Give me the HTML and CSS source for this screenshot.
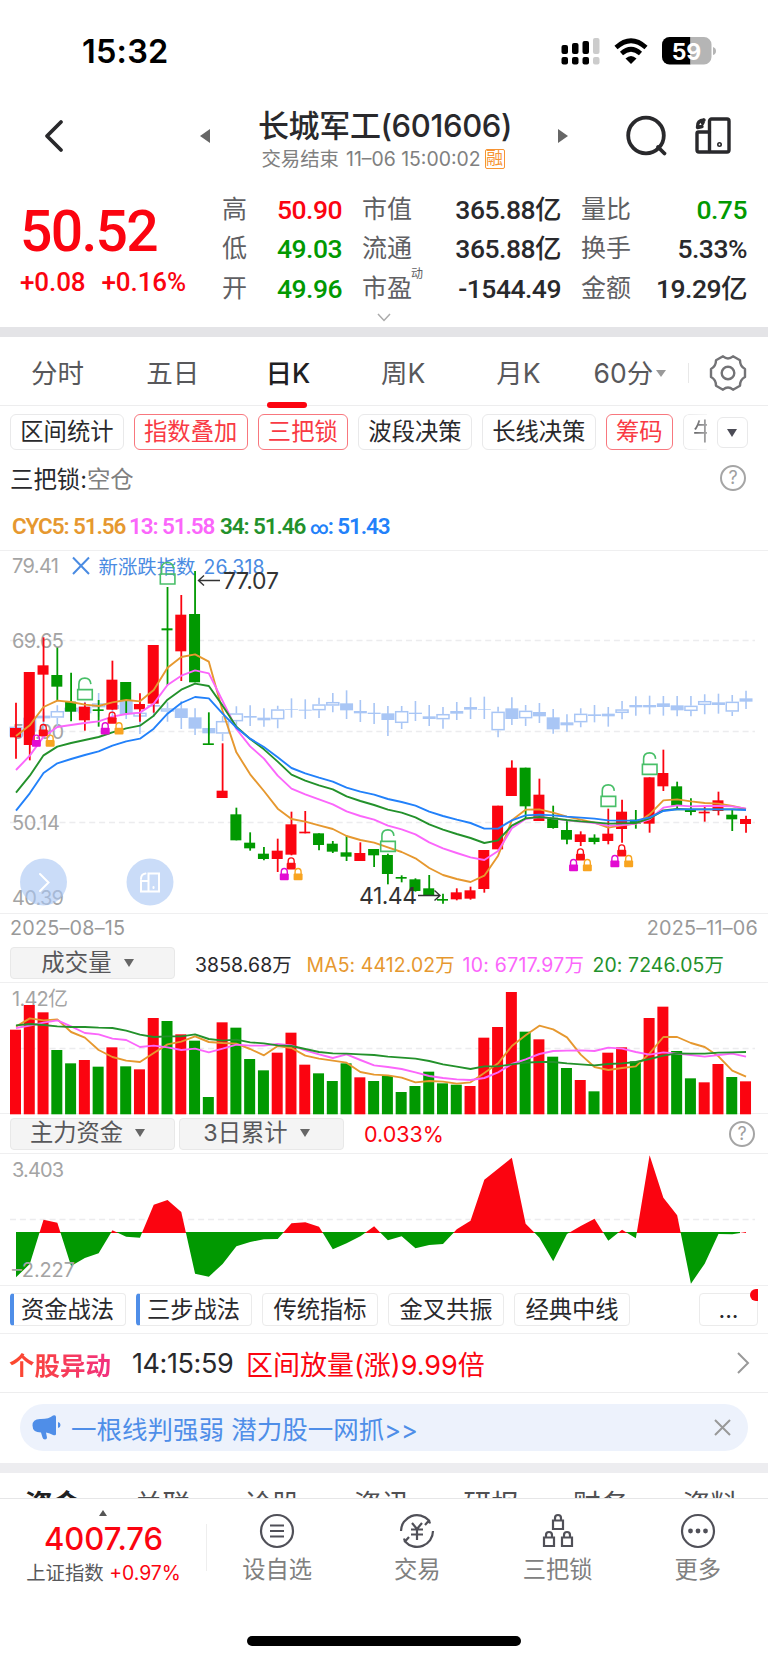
FILE: index.html
```html
<!DOCTYPE html>
<html lang="zh-CN">
<head>
    <meta charset="UTF-8">
    <meta name="viewport" content="width=device-width, initial-scale=1.0">
    <title>长城军工(601606)</title>
    <link rel="stylesheet" href="styles.css">
</head>
<body>
    <div class="status-bar">
        <span class="clock">15:32</span>
        <svg class="status-icons" width="156" height="30" viewBox="562.5 36 156 30">
            <g fill="#000">
                <rect x="562" y="45" width="6.5" height="9" rx="2"/>
                <rect x="572.5" y="43" width="6.5" height="11" rx="2"/>
                <rect x="583" y="41" width="6.5" height="13" rx="2"/>
                <rect x="562" y="57" width="6.5" height="7.5" rx="2"/>
                <rect x="572.5" y="57" width="6.5" height="7.5" rx="2"/>
                <rect x="583" y="57" width="6.5" height="7.5" rx="2"/>
            </g>
            <g fill="#ccc">
                <rect x="593.5" y="38" width="6.5" height="16" rx="2"/>
                <rect x="593.5" y="57" width="6.5" height="7.5" rx="2"/>
            </g>
            <g fill="none" stroke="#000" stroke-width="4.6">
                <path d="M616.5 47.5Q631.5 34 646.5 47.5"/>
                <path d="M622 53.5Q631.5 45 641 53.5"/>
            </g>
            <path d="M626 58.5Q631.5 53.5 637 58.5L631.5 64z"/>
            <path d="M670 37h21v27.5h-21a7.5 7.5 0 0 1-7.5-7.5V44.5a7.5 7.5 0 0 1 7.5-7.5z"/>
            <path fill="#b5b5b5" d="M691 37h13.5a7.5 7.5 0 0 1 7.5 7.5v12.5a7.5 7.5 0 0 1-7.5 7.5H691z"/>
            <path fill="#b5b5b5" d="M713.5 47q3 1 3 4t-3 4z"/>
            <text class="battery-level" x="687" y="59.5" text-anchor="middle">59</text>
        </svg>
    </div>

    <header class="header">
        <svg class="back" width="22" height="34" viewBox="0 0 22 34"><path d="M18 3L4 17l14 14"/></svg>
        <svg class="arrow" width="12" height="16" viewBox="0 0 12 16"><path d="M11 1v14L1 8z"/></svg>
        <div class="title">
            <h1>长城军工(601606)</h1>
            <p><span>交易结束</span> <span class="time">11–06 15:00:02</span><span class="margin-tag">融</span></p>
        </div>
        <svg class="arrow" width="12" height="16" viewBox="0 0 12 16"><path d="M1 1v14l10-7z"/></svg>
        <svg class="search" width="44" height="42" viewBox="0 0 44 42"><circle cx="21" cy="20.5" r="17.8"/><path d="M33 32l6.5 6.5"/></svg>
        <svg class="layout" width="38" height="40" viewBox="0 0 38 40">
            <rect x="15.5" y="3" width="19.5" height="33" rx="2"/>
            <path d="M15.5 16H4.5q-1.5 0-1.5 1.5V34q0 2 2 2h10.5"/>
            <path d="M3.5 11Q3 4.500 10 4M3.500 11.500l4.500-1M10 4l-1.500 3.500"/>
            <circle cx="25.5" cy="28.5" r=".8"/>
        </svg>
    </header>

    <section class="quote">
        <div class="price up">
            <strong>50.52</strong>
            <div class="change"><span>+0.08</span><span>+0.16%</span></div>
        </div>
        <dl class="stats stats-a">
            <dt>高</dt><dd class="up">50.90</dd>
            <dt>低</dt><dd class="down">49.03</dd>
            <dt>开</dt><dd class="down">49.96</dd>
        </dl>
        <dl class="stats stats-b">
            <dt>市值</dt><dd>365.88亿</dd>
            <dt>流通</dt><dd>365.88亿</dd>
            <dt>市盈<sup>动</sup></dt><dd>-1544.49</dd>
        </dl>
        <dl class="stats stats-c">
            <dt>量比</dt><dd class="down">0.75</dd>
            <dt>换手</dt><dd>5.33%</dd>
            <dt>金额</dt><dd>19.29亿</dd>
        </dl>
        <svg class="expand" width="14" height="9" viewBox="0 0 14 9"><path d="M1 1l6 6.5L13 1"/></svg>
    </section>

    <nav class="periods">
        <a>分时</a>
        <a>五日</a>
        <a class="active">日K</a>
        <a>周K</a>
        <a>月K</a>
        <a class="minutes">60分<i></i></a>
        <svg class="gear" width="38" height="38" viewBox="-19 -19 38 38">
            <path d="M17-4V4Q12 6.500 12 12.700L5 16.700Q0 12.500-5 16.700L-12 12.700Q-12 6.500-17 4V-4Q-12-6.500-12-12.700L-5-16.700Q0-12.500 5-16.700L12-12.700Q12-6.500 17-4z"/>
            <circle r="6.3"/>
        </svg>
    </nav>

    <div class="chips">
        <span class="chip">区间统计</span>
        <span class="chip on">指数叠加</span>
        <span class="chip on">三把锁</span>
        <span class="chip">波段决策</span>
        <span class="chip">长线决策</span>
        <span class="chip on">筹码</span>
        <span class="chip cut">牛</span>
        <span class="chip more"><i class="caret"></i></span>
    </div>

    <div class="signal">
        <span>三把锁:<em>空仓</em></span>
        <span class="help">?</span>
    </div>
    <div class="cyc">
        <span class="orange">CYC5: 51.56</span>
        <span class="pink">13: 51.58</span>
        <span class="green">34: 51.46</span>
        <span class="blue"><i>∞</i>: 51.43</span>
    </div>

    <div class="panel">
        <svg width="768" height="362" viewBox="0 551 768 362">
            <g class="grid">
                <path d="M10 640.5H755M10 731.5H755M10 822.5H755"/>
            </g>
            <g class="axis">
                <text x="12" y="572.5" textLength="47">79.41</text>
                <text x="12" y="648" textLength="52">69.65</text>
                <text x="12" y="739" textLength="52">59.90</text>
                <text x="12" y="830" textLength="48">50.14</text>
                <text x="12" y="905" textLength="52">40.39</text>
            </g>
            <path class="legend-x" d="M73 557.5l16 16.5M89 557.5L73 574"/>
            <text class="legend" x="98.5" y="574" textLength="97">新涨跌指数</text>
            <text class="legend" x="203.5" y="574" textLength="61">26.318</text>
            <g id="indexCandles"></g>
            <g id="candles"></g>
            <g id="cycLines"></g>
            <g id="locks"></g>
            <g class="extreme">
                <path d="M220 580.5H199M204 575.5l-5.5 5 5.5 5"/>
                <text x="223" y="589" textLength="56">77.07</text>
                <path d="M418 895.5H440M434.5 890.5l5.5 5-5.5 5"/>
                <text x="359" y="903.5" textLength="58">41.44</text>
            </g>
            <g class="float">
                <circle cx="43.5" cy="882" r="23.5"/>
                <path d="M40 874l8.5 8.5-8.5 8.5"/>
                <circle cx="150" cy="882" r="23.5"/>
                <path d="M148.5 873.5h10.500v18h-10.500zM148.500 881h-7.500v10.500h7.500M141 879q0-5 4.500-5.500M153.500 887v1"/>
            </g>
        </svg>
    </div>
    <div class="dates"><span>2025–08–15</span><span>2025–11–06</span></div>

    <div class="panel-head volume-head">
        <span class="select">成交量<i class="caret"></i></span>
        <span class="now">3858.68万</span>
        <span class="orange">MA5: 4412.02万</span>
        <span class="pink">10: 6717.97万</span>
        <span class="green">20: 7246.05万</span>
    </div>
    <div class="panel">
        <svg width="768" height="130" viewBox="0 983 768 130">
            <g class="grid"><path d="M10 1048.5H755"/></g>
            <g class="axis"><text x="12" y="1005.5" textLength="56">1.42亿</text></g>
            <g id="volumes"></g>
            <g id="volumeLines"></g>
        </svg>
    </div>

    <div class="panel-head flow-head">
        <span class="select">主力资金<i class="caret"></i></span>
        <span class="select">3日累计<i class="caret"></i></span>
        <span class="value up">0.033%</span>
        <span class="help">?</span>
    </div>
    <div class="panel">
        <svg width="768" height="131" viewBox="0 1154 768 131">
            <clipPath id="above"><rect x="0" y="1154" width="768" height="79"/></clipPath>
            <clipPath id="below"><rect x="0" y="1233" width="768" height="60"/></clipPath>
            <g class="grid"><path d="M10 1219.5H755"/></g>
            <path id="flowDown" fill="#019901" clip-path="url(#below)"/>
            <path stroke="#019901" d="M16 1232.5H740"/>
            <path id="flowUp" fill="#fb0410" clip-path="url(#above)"/>
            <g class="axis">
                <text x="12" y="1177" textLength="52">3.403</text>
                <text x="12" y="1277" textLength="63">–2.227</text>
            </g>
        </svg>
    </div>

    <div class="strategies">
        <span class="tag hot">资金战法</span>
        <span class="tag hot">三步战法</span>
        <span class="tag">传统指标</span>
        <span class="tag">金叉共振</span>
        <span class="tag">经典中线</span>
        <span class="tag dots">...</span>
    </div>

    <div class="alert">
        <b>个股异动</b>
        <time>14:15:59</time>
        <span class="up">区间放量(涨)9.99倍</span>
        <svg width="14" height="24" viewBox="0 0 14 24"><path d="M2 2l10 10L2 22"/></svg>
    </div>

    <div class="promo-wrap">
        <div class="promo">
            <svg width="29" height="25" viewBox="0 0 29 25">
                <path d="M9 4Q17 4 21 .5q3-1 3 1.500v17q0 2-3 1-3-2-7-2.500l1 5q0 2-2 2t-2.500-2L9 17.500Q.5 17.500.5 10.500T9 4z"/>
                <path d="M26 7q2.500.5 2.500 3T26 13z"/>
            </svg>
            <span>一根线判强弱 潜力股一网抓&gt;&gt;</span>
            <svg class="close" width="17" height="17" viewBox="0 0 17 17"><path d="M1 1l15 15M16 1L1 16"/></svg>
        </div>
    </div>

    <div class="info-tabs">
        <a class="active">资金</a><a>关联</a><a>诊股</a><a>资讯</a><a>研报</a><a>财务</a><a>资料</a>
    </div>

    <footer class="bottom-nav">
        <div class="index up">
            <i class="up-caret"></i>
            <strong>4007.76</strong>
            <p><span>上证指数</span> +0.97%</p>
        </div>
        <a>
            <svg width="36" height="36" viewBox="-18 -18 36 36"><circle r="16"/><path d="M-7-5.500H7M-7 0H7M-7 5.500H7"/></svg>
            设自选
        </a>
        <a>
            <svg width="36" height="36" viewBox="-18 -18 36 36">
                <path d="M-16 0A16 16 0 0 1 12-10.500L8-6M12-10.500l1 3M16 0A16 16 0 0 1-12 10.500L-8 6M-12 10.500l-1-3"/>
                <path d="M-5-8L0-2 5-8M0-2V9M-6-1.500H6M-6 3.500H6"/>
            </svg>
            交易
        </a>
        <a>
            <svg width="36" height="36" viewBox="-18 -18 36 36">
                <path d="M-5-10.500H5V-2H-5zM-3-10.500V-13q0-3 3-3t3 3v2.500"/>
                <path d="M-14 6.500H-4V15H-14zM-12 6.500V4q0-3 3-3t3 3v2.500"/>
                <path d="M4 6.500H14V15H4zM6 6.500V4q0-3 3-3t3 3v2.500"/>
            </svg>
            三把锁
        </a>
        <a>
            <svg width="36" height="36" viewBox="-18 -18 36 36"><circle r="16"/><g class="solid"><circle cx="-7.5" r="2.4"/><circle r="2.4"/><circle cx="7.5" r="2.4"/></g></svg>
            更多
        </a>
    </footer>
    <div class="home-indicator"></div>

    <script src="charts.js"></script>
</body>
</html>
```
FILE: styles.css
```css
* {
    box-sizing: border-box;
}

body {
    margin: 0;
    width: 768px;
    height: 1663px;
    overflow: hidden;
    background: #fff;
    color: #29292c;
    font-family: Inter, "Noto Sans CJK SC", sans-serif;
    display: flex;
    flex-direction: column;
}

body > * {
    flex-shrink: 0;
}

h1, p, dl, dd {
    margin: 0;
}

i, em {
    font-style: normal;
}

svg {
    display: block;
    fill: none;
}

.up { color: #fb0410; }
.down { color: #019901; }
.orange { color: #e6982f; }
.pink { color: #fb66fb; }
.green { color: #23912b; }
.blue { color: #2281fa; }

.caret {
    border: 5.5px solid transparent;
    border-top: 8px solid #666;
    border-bottom: 0;
}

/* status bar */
.status-bar {
    height: 96px;
    padding: 36px 50px 0 82px;
    display: flex;
    justify-content: space-between;
}

.clock {
    font-size: 32.5px;
    font-weight: 600;
    line-height: 32px;
    letter-spacing: .2px;
    color: #000;
}

.status-icons {
    fill: #000;
    overflow: visible;
}

.battery-level {
    font-size: 23px;
    font-weight: 700;
    fill: #fff;
}

/* header */
.header {
    height: 94px;
    padding: 0 34px 0 43px;
    display: flex;
    align-items: center;
    padding-bottom: 14px;
}

.header svg {
    stroke: #29292c;
    stroke-linecap: round;
    stroke-linejoin: round;
}

.header .back { stroke-width: 3.8; }

.header .arrow {
    stroke: none;
    fill: #666;
    margin-left: 134px;
}

.header .title + .arrow { margin-left: 38px; }

.title {
    margin: 4px 0 0 40px;
    width: 268px;
    text-align: center;
}

.title h1 {
    font-size: 31px;
    font-weight: 500;
    line-height: 42px;
    letter-spacing: -.35px;
    white-space: nowrap;
}

.title p {
    display: flex;
    justify-content: center;
    align-items: center;
    margin-right: 4px;
    font-size: 19.4px;
    line-height: 24px;
    color: #808080;
    white-space: nowrap;
}

.title .time { margin: 0 4px 0 7px; }

.margin-tag {
    width: 20px;
    height: 20px;
    border: 1.5px solid #f79433;
    border-radius: 2px;
    color: #f79433;
    font-size: 17px;
    line-height: 17px;
    display: flex;
    justify-content: center;
}

.header .search { margin-left: 56px; stroke-width: 3.8; }
.header .layout { margin-left: 25px; stroke-width: 3.4; }

/* quote */
.quote {
    position: relative;
    height: 147px;
    border-bottom: 10px solid #e4e4e7;
    padding: 0 20px 0 20px;
    display: flex;
    font-family: Roboto, "Noto Sans CJK SC", sans-serif;
}

.price { width: 202px; }

.price strong {
    display: block;
    margin-top: 12px;
    font-size: 57px;
    font-weight: 500;
    line-height: 60px;
    letter-spacing: -1.7px;
}

.change {
    display: flex;
    gap: 16px;
    margin-top: 5px;
    font-size: 26px;
    line-height: 30px;
    font-weight: 500;
    letter-spacing: -.1px;
}

.stats {
    display: grid;
    grid-template-columns: auto 1fr;
    grid-auto-rows: 39.4px;
    font-size: 26.5px;
    line-height: 39px;
}

.stats dt {
    color: #606063;
    font-size: 25px;
    position: relative;
}

.stats dd {
    text-align: right;
    font-weight: 500;
    letter-spacing: -.5px;
}

.stats sup {
    position: absolute;
    left: 49px;
    top: -3px;
    font-size: 12px;
    line-height: 16px;
}

.stats-a { width: 120px; }
.stats-b { width: 199px; margin-left: 20px; }
.stats-c { width: 166px; margin-left: 20px; }

.expand {
    position: absolute;
    left: 377px;
    top: 123px;
    stroke: #aaa;
    stroke-width: 1.5;
}

/* period tabs */
.periods {
    height: 69px;
    border-bottom: 1px solid #ededee;
    display: flex;
    font-size: 26.5px;
    line-height: 72px;
    color: #58585b;
}

.periods a {
    width: 115.2px;
    height: 72px;
    text-align: center;
    position: relative;
}

.periods .active {
    color: #202022;
    font-weight: 500;
}

.periods .active::after {
    content: "";
    position: absolute;
    left: 37px;
    top: 65px;
    width: 40px;
    height: 6px;
    border-radius: 3px;
    background: #fb0410;
}

.periods .minutes {
    display: flex;
    align-items: center;
    justify-content: center;
    gap: 3px;
    width: 113px;
    padding-right: 5px;
    background: linear-gradient(#e8e8e8, #e8e8e8) right 26px / 1px 20px no-repeat;
}

.minutes i {
    border: 5.5px solid transparent;
    border-top: 7px solid #999;
    border-bottom: 0;
}

.gear {
    margin: 16.500px 0 0 20px;
    stroke: #737376;
    stroke-width: 2.4;
    stroke-linejoin: round;
}

/* indicator chips */
.chips {
    display: flex;
    align-items: center;
    gap: 10px;
    padding: 8px 0 0 10px;
    height: 44px;
}

.chip {
    height: 36px;
    padding: 0 9.3px;
    border: 1px solid #e9e9ea;
    border-radius: 6px;
    font-size: 23.3px;
    line-height: 34px;
    white-space: nowrap;
}

.chip.on {
    color: #f93a44;
    border-color: #f8777e;
}

.chip.cut {
    width: 24px;
    overflow: hidden;
    border-right: 0;
    border-radius: 6px 0 0 6px;
    -webkit-mask: linear-gradient(90deg, #000, #0006);
    mask: linear-gradient(90deg, #000, #0006);
}

.chip.more {
    width: 31px;
    height: 31px;
    padding: 11px 0 0 9px;
}

.chip .caret {
    display: block;
    width: 0;
    border-top-color: #4b4b55;
}

.signal {
    display: flex;
    justify-content: space-between;
    align-items: center;
    padding: 0 22px 2px 10px;
    height: 58px;
    font-size: 23.4px;
}

.signal em { color: #808080; }

.help {
    width: 26px;
    height: 26px;
    border: 2.2px solid #a5a5a5;
    border-radius: 50%;
    color: #a0a0a0;
    font-size: 18px;
    line-height: 22px;
    text-align: center;
}

.cyc {
    display: flex;
    height: 42px;
    padding-left: 12px;
    font-family: Roboto, sans-serif;
    font-size: 22.5px;
    font-weight: 600;
    line-height: 36px;
    letter-spacing: -1.1px;
    white-space: nowrap;
}

.cyc .orange { width: 117px; }
.cyc .pink { width: 91px; }
.cyc .green { width: 90px; }
.cyc i { font-size: 18px; }

/* chart panels */
.panel {
    border-top: 1px solid #efeff0;
    border-bottom: 1px solid #efeff0;
}

.panel svg {
    overflow: visible;
}

.grid path {
    stroke: #ececee;
    stroke-width: 1.3;
    stroke-dasharray: 6 3.9;
}

.axis text {
    fill: #a4a4a4;
    font-size: 20px;
}

.legend {
    fill: #4a8be2;
    font-size: 19.4px;
}

.legend-x {
    stroke: #4a8be2;
    stroke-width: 2;
}

.extreme text {
    fill: #333;
    font-size: 23px;
}

.extreme path {
    stroke: #333;
    stroke-width: 1.4;
}

.float circle {
    fill: #aac6f4;
    opacity: .62;
}

.float path {
    stroke: #fff;
    stroke-width: 2;
    stroke-linecap: round;
}

.dates {
    display: flex;
    justify-content: space-between;
    padding: 0 10px;
    height: 33px;
    font-size: 19.8px;
    line-height: 29px;
    letter-spacing: .2px;
    color: #999;
}

.panel-head {
    display: flex;
    align-items: center;
    white-space: nowrap;
}

.select {
    width: 165px;
    height: 32px;
    border: 1px solid #e8e8e8;
    border-radius: 4px;
    background: #f4f4f4;
    color: #58585b;
    font-size: 23.3px;
    line-height: 28px;
    padding: 0 10px 1px 0;
    display: flex;
    align-items: center;
    justify-content: center;
    gap: 12px;
}

.volume-head {
    height: 35px;
    padding: 0 0 3px 10px;
    font-size: 19.4px;
    letter-spacing: .12px;
}

.now { margin-left: 20px; width: 111.500px; }
.volume-head .orange { width: 156px; }
.volume-head .pink { width: 130px; letter-spacing: .3px; }

.flow-head {
    height: 39px;
    padding: 0 13px 0 10px;
    gap: 4px;
}

.value {
    margin-left: 16px;
    font-size: 21.5px;
}

.flow-head .help { margin-left: auto; }

/* strategy tags */
.strategies {
    display: flex;
    gap: 10px;
    padding: 7px 10px;
    height: 48px;
    border-bottom: 1px solid #efeff0;
}

.tag {
    width: 116px;
    height: 33px;
    border: 1px solid #ebebeb;
    border-radius: 4px;
    font-size: 23.3px;
    line-height: 31px;
    text-align: center;
    white-space: nowrap;
}

.tag.hot { border-left: 4px solid #4f8ee8; padding-right: 4px; }

.tag.dots {
    position: relative;
    width: 59px;
    margin-left: auto;
}

.tag.dots::after {
    content: "";
    position: absolute;
    right: -1px;
    top: -5px;
    width: 8px;
    height: 12px;
    border-radius: 6px 0 0 6px;
    background: #fb0410;
}

.alert {
    display: flex;
    align-items: center;
    height: 59px;
    padding: 0 18px 0 9px;
    border-bottom: 1px solid #ededee;
    font-size: 27px;
    white-space: nowrap;
}

.alert b {
    width: 102px;
    font-size: 25.5px;
    background: linear-gradient(90deg, #fc4a2a, #f23080);
    -webkit-background-clip: text;
    background-clip: text;
    color: transparent;
}

.alert time {
    margin-left: 21px;
    width: 114px;
    letter-spacing: -.4px;
}

.alert svg {
    margin-left: auto;
    stroke: #999;
    stroke-width: 2;
}

/* promo banner */
.promo-wrap {
    height: 80px;
    padding: 11px 20px;
    border-bottom: 10px solid #ededf0;
}

.promo {
    height: 47px;
    border-radius: 24px;
    padding: 0 17px 0 12px;
    background: #edf2fc;
    color: #4f8ee8;
    font-size: 25.5px;
    display: flex;
    align-items: center;
    gap: 10px;
}

.promo svg { fill: #4f8ee8; }

.promo .close {
    margin-left: auto;
    stroke: #999;
    stroke-width: 2;
}

.info-tabs {
    height: 25px;
    overflow: hidden;
    display: flex;
    font-size: 28px;
    line-height: 64px;
    color: #505053;
}

.info-tabs a {
    width: 109.6px;
    flex-shrink: 0;
    text-align: center;
}

.info-tabs a:first-child { margin-left: -2px; }

.info-tabs .active {
    color: #202022;
    font-weight: 700;
}

/* bottom navigation */
.bottom-nav {
    position: relative;
    height: 138px;
    border-top: 1px solid #e6e6e7;
    display: flex;
    background: #fff;
}

.index {
    width: 207px;
    display: flex;
    flex-direction: column;
    align-items: center;
    background: linear-gradient(#eee, #eee) right 25px / 1px 47px no-repeat;
}

.up-caret {
    margin-top: 11px;
    border: 4px solid transparent;
    border-bottom: 6px solid #555;
    border-top: 0;
}

.index strong {
    margin-top: 5px;
    font-size: 31px;
    font-weight: 500;
    line-height: 36px;
}

.index p {
    margin-top: 2px;
    font-size: 19.4px;
    line-height: 28px;
    white-space: nowrap;
}

.index p span { color: #58585b; }

.bottom-nav a {
    width: 140.3px;
    display: flex;
    flex-direction: column;
    align-items: center;
    padding-top: 14px;
    color: #808080;
    font-size: 23.3px;
    line-height: 36px;
    gap: 3px;
}

.bottom-nav svg {
    stroke: #505058;
    stroke-width: 2.2;
}

.bottom-nav .solid {
    fill: #505058;
    stroke: none;
}

.home-indicator {
    width: 274px;
    height: 10px;
    margin: 0 auto;
    border-radius: 5px;
    background: #000;
}
```
FILE: charts.js
```javascript
const RED = '#fb0410';
const GREEN = '#019901';
const PALE = '#a9c6f5';
const STEP = 13.774;

const px = i => 16 + i * STEP;
const $ = id => document.getElementById(id);

// daily candles: colour, high, body top, body bottom, low (thirds of a pixel below 545)
const candles = `r 473 549 577 641|r 381 381 600 646|r 277 361 389 530|g 308 390 425 467|g 383 470 500 529|r 473 485 526 557
|g 465 493 498 545|r 347 404 494 494|g 411 411 466 504|r 445 477 493 530|r 300 300 476 503|g 126 250 256 420|r 150 209 319 408
|g 78 207 412 412|g 502 595 600 600|r 595 737 759 759|g 788 808 886 886|g 862 893 910 917|g 906 926 942 946|r 881 917 942 981
|r 800 838 929 931|r 798 860 865 865|g 865 865 900 916|g 888 896 920 924|g 872 922 935 948|r 892 924 948 948|g 912 912 931 966
|g 926 930 987 1018|g 991 996 1001 1012|g 1000 1003 1038 1040|g 990 1030 1050 1050|g 1046 1062 1067 1076|r 1030 1042 1063 1066
|r 1025 1036 1061 1064|r 915 915 1032 1043|r 782 782 913 913|r 646 668 753 753|g 668 668 784 822|r 701 749 828 828
|g 782 818 849 851|g 825 855 884 898|r 859 868 891 903|g 868 878 891 898|r 791 866 888 898|r 764 800 852 893|g 795 824 836 851
|r 697 697 836 863|r 614 684 724 738|g 710 724 782 790|g 760 795 801 811|r 782 800 805 830|r 740 766 798 811|g 795 809 823 858
|r 812 822 837 863`.split('|').map(s => s.trim().split(' '));

// overlay index candles: h = hollow, f = filled
const indexCandles = `f 541 545 575 577|f 515 518 560 560|h 500 512 520 560|h 481 498 518 542|h 470 488 500 515|f 470 485 505 520
|h 444 475 487 515|f 455 480 492 520|f 455 466 508 522|h 490 503 515 567|f 460 480 485 515|h 472 490 500 530|f 468 490 519 552
|f 490 517 551 570|f 535 549 565 570|h 513 528 566 588|h 484 505 529 545|f 481 513 518 543|f 490 518 526 545|h 482 493 523 550
|f 460 492 494 518|f 463 494 497 522|h 458 478 496 519|h 444 471 482 502|f 436 475 496 522|f 465 498 505 531|f 474 503 507 537
|f 483 505 525 573|h 483 498 534 552|f 468 503 507 528|f 480 514 522 543|h 486 507 523 551|f 471 498 506 525|f 457 486 494 522
|f 455 492 494 522|h 485 500 556 577|f 457 490 522 540|h 480 497 520 543|f 474 501 514 534|f 492 517 553 566|f 508 532 541 560
|h 490 506 532 547|f 480 508 513 532|f 486 506 514 545|h 468 493 504 523|f 454 480 487 512|f 452 480 487 508|f 453 475 486 512
|f 453 481 496 514|h 453 482 498 514|h 448 468 480 508|f 446 472 480 506|h 450 470 500 513|f 437 460 470 492`
    .split('|').map(s => s.trim().split(' '));

const cycLines = {
    '#e6982f': [573,541,486,467,471,479,483,472,465,469,435,368,336,328,350,498,622,688,738,791,822,830,841,852,873,885,893,907,921,940,969,990,1002,1011,992,932,826,794,793,803,815,824,833,848,841,836,808,766,763,769,774,776,783,792],
    '#fb66fb': [675,632,575,546,540,534,529,515,507,503,476,420,392,376,385,468,552,604,641,692,731,748,763,778,799,813,824,842,853,868,892,910,924,937,945,918,850,822,816,820,826,830,834,842,840,836,823,788,781,784,783,783,784,791],
    '#23912b': [743,692,631,605,594,585,576,562,550,542,512,464,434,416,423,482,545,582,613,650,689,707,721,733,754,768,780,794,803,817,838,854,867,879,894,886,842,820,816,820,825,829,832,836,835,834,820,796,792,793,793,793,793,794],
    '#2281fa': [797,745,684,655,642,630,619,602,589,581,551,506,474,456,460,506,548,581,606,637,669,685,698,710,728,740,749,762,771,782,800,813,824,834,851,851,826,811,809,811,815,818,821,826,827,827,817,798,793,793,793,793,793,795]
};

const volumes = [389,315,337,450,490,480,500,442,499,508,354,363,403,422,591,367,383,477,511,458,398,494,520,543,490,532,543,528,576,558,515,550,554,558,413,381,276,395,418,470,504,540,574,458,442,484,354,320,453,535,547,492,531,544];
const volumeColors = 'rrrggrgrgrrgrggrgggrrrgggrgggggggrrrrgrggrgrrgrrggrrgr';

const volumeLines = {
    '#e6982f': [380,355,361,358,396,413,450,471,482,486,459,433,425,409,426,429,431,447,466,438,444,467,476,482,488,516,524,526,533,547,543,545,551,547,519,490,438,406,377,388,412,464,501,510,504,499,460,411,411,429,441,469,512,530],
    '#fb66fb': [384,377,368,361,379,399,403,416,420,441,437,442,450,446,457,446,434,437,437,432,436,451,463,474,463,480,496,501,507,517,528,534,538,540,534,517,492,478,462,453,452,451,453,443,446,456,464,457,461,465,470,465,461,470],
    '#23912b': [376,372,375,379,381,381,383,384,392,404,411,409,409,403,417,422,419,427,430,436,438,447,456,460,461,463,465,470,473,476,483,493,500,507,499,499,493,488,486,486,490,493,496,492,490,486,477,467,460,461,461,458,457,456]
};

const flow = [502,462,329,338,468,444,430,361,380,383,284,270,306,491,500,462,409,396,388,387,340,337,350,418,400,379,349,391,379,415,405,402,358,332,209,176,143,341,383,454,372,348,326,392,359,385,136,263,316,521,461,372,373,366];

function drawLines(id, lines, base) {
    $(id).innerHTML = Object.entries(lines).map(([color, ys]) =>
        `<polyline fill="none" stroke="${color}" stroke-width="1.9" stroke-linejoin="round" points="${ys.map((y, i) => `${px(i)},${base + y / 3}`).join(' ')}"/>`
    ).join('');
}

function openLock(i, top) {
    const x = px(i);
    const y = 545 + top / 3;
    return `<path fill="none" stroke="#48bf68" stroke-width="1.6" d="M${x - 7.2} ${y + 12}h14.6v10h-14.6zM${x - 6} ${y + 12}v-5.5q0-6 6-6q5.5 0 6 6"/>`;
}

function closedLock(x, y, color) {
    return `<rect x="${x - 4.5}" y="${y + 5.5}" width="9" height="6.7" rx="1" fill="${color}"/>
        <path fill="none" stroke="${color}" stroke-width="1.4" d="M${x - 3} ${y + 6}v-2q0-3.5 3-3.5t3 3.5v2"/>`;
}

function lockGroup(i, top) {
    const x = px(i) - .3;
    const y = 545 + top / 3;
    return closedLock(x, y, '#fb0d14') + closedLock(x - 6.9, y + 10.6, '#e20cd2') + closedLock(x + 6.9, y + 10.6, '#f8a420');
}

$('candles').innerHTML = candles.map(([c, ...v], i) => {
    const [high, top, bottom, low] = v.map(n => 545 + n / 3);
    const color = c === 'r' ? RED : GREEN;
    return `<path stroke="${color}" stroke-width="1.8" d="M${px(i)} ${high}V${low}"/>
        <rect x="${px(i) - 6}" y="${top}" width="11" height="${bottom - top}" fill="${color}"/>`;
}).join('');

$('indexCandles').innerHTML = indexCandles.map(([c, ...v], i) => {
    const [high, top, bottom, low] = v.map(n => 545 + n / 3);
    const x = px(i);
    if (c === 'f') {
        return `<path stroke="${PALE}" stroke-width="1.6" d="M${x} ${high}V${low}"/>
            <rect x="${x - 6.5}" y="${top}" width="13" height="${bottom - top}" fill="${PALE}"/>`;
    }
    return `<path stroke="${PALE}" stroke-width="1.6" d="M${x} ${high}V${top}M${x} ${bottom}V${low}"/>
        <rect x="${x - 6}" y="${top + .7}" width="12" height="${bottom - top - 1.4}" fill="#fff" stroke="${PALE}" stroke-width="1.5"/>`;
}).join('');

$('volumes').innerHTML = volumes.map((v, i) =>
    `<rect x="${px(i) - 6}" y="${900 + v / 3}" width="11" height="${214.3 - v / 3}" fill="${volumeColors[i] === 'r' ? RED : GREEN}"/>`
).join('');

drawLines('cycLines', cycLines, 545);
drawLines('volumeLines', volumeLines, 900);

$('locks').innerHTML = [[5, 398], [11, 51], [27, 853], [43, 718], [46, 622]].map(a => openLock(...a)).join('')
    + [[2, 537], [7, 500], [20, 937], [41, 910], [44, 898]].map(a => lockGroup(...a)).join('');

const area = `M16 1233${flow.map((y, i) => `L${px(i)} ${1110 + y / 3}`).join('')}L746 1233z`;
$('flowUp').setAttribute('d', area);
$('flowDown').setAttribute('d', area);
```
